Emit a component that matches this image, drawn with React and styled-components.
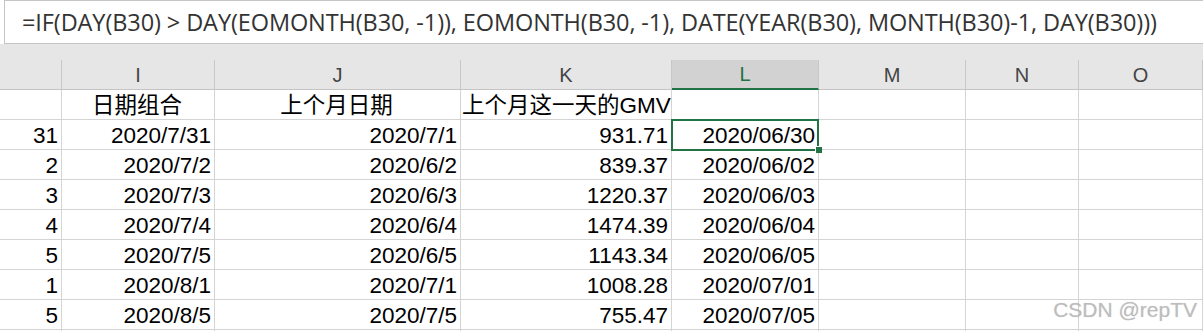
import React from "react";
import styled, { createGlobalStyle, css } from "styled-components";

const Global = createGlobalStyle`
  html, body { margin: 0; padding: 0; background: #ffffff; overflow: hidden; }
  #root { width: 1203px; height: 331px; overflow: hidden; }
`;

const GREEN = "#217346";
const GRID = "#d4d4d4";
const HEAD_BG = "#e6e6e6";
const CELL_FONT = `"Liberation Sans", "Noto Sans CJK SC", sans-serif`;

const Page = styled.div`
  position: relative;
  width: 1203px;
  height: 331px;
  overflow: hidden;
  display: flex;
  flex-direction: column;
  & > * { flex-shrink: 0; }
`;

const FormulaBar = styled.div`
  height: 44px;
  background: #ffffff;
  padding-left: 4px;
  display: flex;
  box-sizing: border-box;
`;

const FormulaBox = styled.div`
  flex: 1;
  height: 44px;
  box-sizing: border-box;
  border: 1px solid #c6c6c6;
  border-right: none;
  background: #ffffff;
  display: flex;
  align-items: center;
  padding-left: 17px;
`;

const FormulaText = styled.span`
  font-family: "Open Sans", "Noto Sans CJK SC", sans-serif;
  font-size: 23.5px;
  color: #333333;
  white-space: nowrap;
  letter-spacing: -0.1px;
`;

const Gap = styled.div`
  height: 16px;
  background: ${HEAD_BG};
`;

const Sheet = styled.div`
  display: grid;
  grid-template-columns: 62px 153px 246px 211px 147px 147px 113px 1fr;
  grid-auto-rows: 30px;
`;

const HeadCell = styled.div`
  box-sizing: border-box;
  background: ${HEAD_BG};
  border-bottom: 1px solid #c4c4c4;
  border-right: 1px solid #c8c8c8;
  display: flex;
  align-items: center;
  justify-content: center;
  font-family: ${CELL_FONT};
  font-size: 20px;
  color: #444444;
  padding-top: 1px;
  ${(p) =>
    p.$active &&
    css`
      background: #d2d2d2;
      color: ${GREEN};
      border-bottom: 2px solid ${GREEN};
    `}
`;

const Cell = styled.div`
  position: relative;
  box-sizing: border-box;
  border-right: 1px solid ${GRID};
  border-bottom: 1px solid ${GRID};
  display: flex;
  align-items: flex-end;
  justify-content: ${(p) =>
    p.$align === "center" ? "center" : p.$align === "left" ? "flex-start" : "flex-end"};
  padding: 0 3px 1px 1px;
  font-family: ${CELL_FONT};
  font-size: 22.5px;
  line-height: 24px;
  color: #000000;
  white-space: nowrap;
  ${(p) =>
    p.$selected &&
    css`
      &::after {
        content: "";
        position: absolute;
        left: -1px;
        top: -1px;
        right: -1px;
        bottom: -2px;
        border: 2px solid ${GREEN};
        pointer-events: none;
        z-index: 2;
      }
    `}
`;

const FillHandle = styled.span`
  position: absolute;
  right: -4px;
  bottom: -4px;
  width: 6px;
  height: 6px;
  background: ${GREEN};
  border-left: 1px solid #ffffff;
  border-top: 1px solid #ffffff;
  z-index: 3;
`;

const Watermark = styled.div`
  position: absolute;
  right: 6px;
  bottom: 9px;
  font-family: "Liberation Sans", sans-serif;
  font-size: 21px;
  color: #bdbdbd;
  text-shadow: 0 0 1px rgba(150, 150, 150, 0.35);
  pointer-events: none;
`;

const columns = ["", "I", "J", "K", "L", "M", "N", "O"];

const rows = [
  ["", "日期组合", "上个月日期", "上个月这一天的GMV", ""],
  ["31", "2020/7/31", "2020/7/1", "931.71", "2020/06/30"],
  ["2", "2020/7/2", "2020/6/2", "839.37", "2020/06/02"],
  ["3", "2020/7/3", "2020/6/3", "1220.37", "2020/06/03"],
  ["4", "2020/7/4", "2020/6/4", "1474.39", "2020/06/04"],
  ["5", "2020/7/5", "2020/6/5", "1143.34", "2020/06/05"],
  ["1", "2020/8/1", "2020/7/1", "1008.28", "2020/07/01"],
  ["5", "2020/8/5", "2020/7/5", "755.47", "2020/07/05"],
  ["", "", "", "", ""],
];

const headerAlign = ["right", "center", "center", "left", "right"];

export default function App() {
  const formula =
    "=IF(DAY(B30) > DAY(EOMONTH(B30, -1)), EOMONTH(B30, -1), DATE(YEAR(B30), MONTH(B30)-1, DAY(B30)))";
  return (
    <Page>
      <Global />
      <FormulaBar>
        <FormulaBox>
          <FormulaText>{formula}</FormulaText>
        </FormulaBox>
      </FormulaBar>
      <Gap />
      <Sheet>
        {columns.map((c, i) => (
          <HeadCell key={"h" + i} $active={c === "L"}>
            {c}
          </HeadCell>
        ))}
        {rows.map((r, ri) => (
          <React.Fragment key={"r" + ri}>
            {r.map((v, ci) => {
              const selected = ri === 1 && ci === 4;
              return (
                <Cell
                  key={ci}
                  $align={ri === 0 ? headerAlign[ci] : "right"}
                  $selected={selected}
                >
                  {v}
                  {selected && <FillHandle />}
                </Cell>
              );
            })}
            <Cell />
            <Cell />
            <Cell />
          </React.Fragment>
        ))}
      </Sheet>
      <Watermark>CSDN @repTV</Watermark>
    </Page>
  );
}
